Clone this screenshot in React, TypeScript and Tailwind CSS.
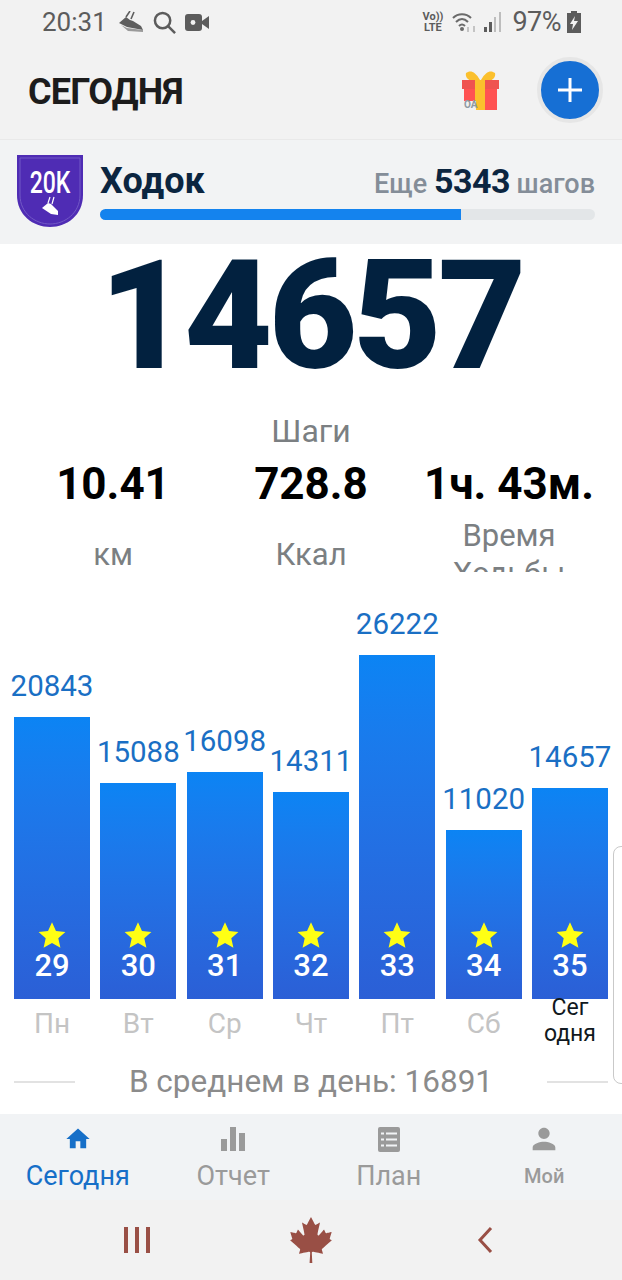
import { MdHome, MdPerson } from 'react-icons/md'
import { FaCanadianMapleLeaf } from 'react-icons/fa'

const DAYS = [
  { label: 'Пн', steps: 20843, height: 282, streak: 29 },
  { label: 'Вт', steps: 15088, height: 216, streak: 30 },
  { label: 'Ср', steps: 16098, height: 227, streak: 31 },
  { label: 'Чт', steps: 14311, height: 207, streak: 32 },
  { label: 'Пт', steps: 26222, height: 344, streak: 33 },
  { label: 'Сб', steps: 11020, height: 169, streak: 34 },
  { label: 'Сегодня', steps: 14657, height: 211, streak: 35, today: true },
]

function StatusBar() {
  return (
    <div className="h-[44px] bg-[#f2f2f2] flex items-center justify-between pl-[42px] pr-[41px] text-[#5c5c5c]">
      <div className="flex items-center">
        <span className="text-[26px] leading-none">20:31</span>
        <svg viewBox="0 0 25 22" className="w-[25px] h-[22px] ml-[12px]">
          <path d="M0 12 L7 6 L11 9 L14 10 L22 15 L24 19 L8 16 Z" fill="#5e5e5e" />
          <path d="M2 14 L9 20 L24 21 L24 19 L8 17 Z" fill="#9a9a9a" />
          <path d="M7 6 L11 0 M12 8 L15 1" stroke="#5e5e5e" strokeWidth="1.6" />
        </svg>
        <svg viewBox="0 0 24 24" className="w-[23px] h-[23px] ml-[9px]" fill="none" stroke="#5c5c5c" strokeWidth="2.6">
          <circle cx="10" cy="10" r="8" />
          <path d="M16 16 L23 23" />
        </svg>
        <svg viewBox="0 0 24 17" className="w-[24px] h-[17px] ml-[9px]">
          <rect width="17" height="17" rx="3" fill="#5c5c5c" />
          <path d="M17 7 L24 2 V15 L17 10 Z" fill="#5c5c5c" />
          <circle cx="8" cy="8.5" r="2.4" fill="#f2f2f2" />
        </svg>
      </div>
      <div className="flex items-center">
        <div className="text-[11px] leading-[11px] font-bold text-center">
          <div>Vo))</div>
          <div>LTE</div>
        </div>
        <svg viewBox="0 0 25 21" className="w-[25px] h-[21px] ml-[9px]" fill="none" stroke="#6a6a6a" strokeWidth="2">
          <path d="M1 6 C6 1 14 1 19 6 M4 10 C8 6 12 6 16 10 M7 14 C9 12 11 12 13 14" />
          <circle cx="10" cy="17" r="2" fill="#6a6a6a" stroke="none" />
          <path d="M16 20 V15 M22 20 V14" stroke="#b5b5b5" strokeWidth="1.5" />
        </svg>
        <svg viewBox="0 0 18 20" className="w-[18px] h-[20px] ml-[7px]">
          <rect x="0" y="15" width="3" height="5" fill="#5c5c5c" />
          <rect x="5" y="10" width="3" height="10" fill="#5c5c5c" />
          <rect x="10" y="5" width="2" height="15" fill="#bdbdbd" />
          <rect x="15" y="0" width="2" height="20" fill="#bdbdbd" />
        </svg>
        <span className="text-[27px] leading-none ml-[10px] tracking-[-0.5px]">97%</span>
        <svg viewBox="0 0 14 22" className="w-[14px] h-[22px] ml-[6px]">
          <path d="M4 0 H10 V2 H14 V22 H0 V2 H4 Z" fill="#5c5c5c" />
          <path d="M8 5 L3 13 H6 L5 19 L11 10 H7 Z" fill="#f2f2f2" />
        </svg>
      </div>
    </div>
  )
}

function Header() {
  return (
    <div className="h-[96px] bg-[#f2f2f2] border-b border-[#e9e9e9] flex items-center pl-[28px] pr-[19px]">
      <h1 className="text-[36px] font-bold text-[#1c1c1c] tracking-[-0.8px] flex-1">СЕГОДНЯ</h1>
      <div className="relative w-[37px] h-[40px] mr-[38px] -mt-[3px]">
        <svg viewBox="0 0 37 40" className="w-full h-full">
          <path d="M18 10 C13 1 8 0 4 3 C3 7 6 10 10 11 Z M19 10 C24 1 29 0 33 3 C34 7 31 10 27 11 Z" fill="#fbc02d" />
          <rect x="0" y="10" width="37" height="9" fill="#ef5350" />
          <rect x="2" y="19" width="33" height="21" fill="#ff5252" />
          <rect x="13" y="10" width="10" height="30" fill="#fbc02d" />
          <rect x="1" y="31" width="13" height="9" fill="#f2f2f2" />
        </svg>
        <span className="absolute left-[2px] bottom-0 text-[10px] leading-[10px] font-bold text-[#8f9aa3]">OA</span>
      </div>
      <button className="w-[66px] h-[66px] rounded-full bg-[#166fd4] border-[4px] border-[#e6e6e6] flex items-center justify-center -mt-[4px]">
        <svg viewBox="0 0 26 26" className="w-[26px] h-[26px]" stroke="#fff" strokeWidth="3">
          <path d="M13 1 V25 M1 13 H25" />
        </svg>
      </button>
    </div>
  )
}

function GoalBadge() {
  return (
    <div className="relative w-[66px] h-[72px] shrink-0">
      <svg viewBox="0 0 66 72" className="absolute inset-0 w-full h-full">
        <path d="M0 0 H66 V40 C66 60 50 72 33 72 C16 72 0 60 0 40 Z" fill="#4f2cb4" />
        <path d="M3 3 H63 V40 C63 58 48 69 33 69 C18 69 3 58 3 40 Z" fill="none" stroke="#7258c6" strokeWidth="1" />
        <path d="M25 53 L31 48 L34 49 L41 56 L41 60 L34 59 Z" fill="#fff" />
        <path d="M33 42 L31 48 M37 42 L35 49" stroke="#fff" strokeWidth="1.2" />
      </svg>
      <span className="absolute top-[9px] inset-x-0 text-center text-[32px] leading-[36px] font-medium text-white scale-x-[0.72]">20K</span>
    </div>
  )
}

function GoalRow() {
  return (
    <div className="h-[104px] bg-[#f2f3f4] flex pl-[17px] pr-[27px] pt-[15px]">
      <GoalBadge />
      <div className="flex-1 ml-[17px]">
        <div className="flex items-baseline justify-between h-[52px]">
          <span className="text-[36px] leading-[52px] font-bold text-[#0b2540]">Ходок</span>
          <span className="text-[27px] text-[#848d98] font-medium">
            Еще <span className="text-[34px] font-bold text-[#0b2540] tracking-[-0.5px]">5343</span> шагов
          </span>
        </div>
        <div className="h-[11px] mt-[2px] rounded-full bg-[#e3e6e8] overflow-hidden">
          <div className="h-full w-[73%] bg-[#1483ee]" />
        </div>
      </div>
    </div>
  )
}

function Stat({ value, label }: { value: string; label: string }) {
  return (
    <div className="w-[198px] flex flex-col items-center">
      <div className="text-[44px] leading-[54px] font-bold text-black whitespace-nowrap">{value}</div>
      <div className="h-[88px] shrink-0 flex items-center">
        <div className="max-w-[130px] text-[31px] leading-[38px] text-[#7b7f82] text-center">{label}</div>
      </div>
    </div>
  )
}

function Summary() {
  return (
    <div>
      <div className="text-[153px] leading-[143px] font-black text-[#02213f] text-center tracking-[-4px]">14657</div>
      <div className="text-[32px] leading-[40px] mt-[24px] text-[#7b7f82] text-center">Шаги</div>
      <div className="h-[121px] overflow-hidden flex justify-between px-[14px] pt-[6px]">
        <Stat value="10.41" label="км" />
        <Stat value="728.8" label="Ккал" />
        <Stat value="1ч. 43м." label="Время Ходьбы" />
      </div>
    </div>
  )
}

function Chart() {
  return (
    <div className="h-[427px] flex items-end justify-between px-[14px]">
      {DAYS.map(day => (
        <div key={day.label} className="w-[76px] flex flex-col items-center">
          <div className="text-[29.5px] leading-[36px] text-[#1a6fc4] mb-[13px] whitespace-nowrap">{day.steps}</div>
          <div
            className="w-full bg-gradient-to-b from-[#0b84f4] to-[#2b5fd6] flex flex-col items-center justify-end pb-[15px]"
            style={{ height: day.height }}
          >
            <svg viewBox="0 0 24 24" className="w-[28px] h-[28px]" fill="#ffff14">
              <path d="M12 1 L15.4 8.6 L23.5 9.4 L17.4 14.8 L19.2 23 L12 18.8 L4.8 23 L6.6 14.8 L0.5 9.4 L8.6 8.6 Z" />
            </svg>
            <span className="text-[31px] leading-[36px] font-medium text-white mt-[-1px]">{day.streak}</span>
          </div>
        </div>
      ))}
    </div>
  )
}

function DayLabels() {
  return (
    <div className="flex justify-between px-[14px] h-[54px]">
      {DAYS.map(day => (
        <div key={day.label} className="w-[76px] text-center">
          {day.today ? (
            <div className="text-[23px] leading-[26px] text-[#101820] -mt-[4px]">
              Сег
              <br />
              одня
            </div>
          ) : (
            <div className="text-[28px] leading-[50px] text-[#c4c4c4]">{day.label}</div>
          )}
        </div>
      ))}
    </div>
  )
}

function Average() {
  return (
    <div className="flex items-center justify-between px-[14px] h-[61px] pb-[3px]">
      <div className="w-[61px] h-[2px] bg-[#e2e2e2]" />
      <span className="text-[31.5px] text-[#8b8b8b]">В среднем в день: 16891</span>
      <div className="w-[61px] h-[2px] bg-[#e2e2e2]" />
    </div>
  )
}

function TabItem({ icon, label, active, small }: { icon: React.ReactNode; label: string; active?: boolean; small?: boolean }) {
  return (
    <div className={`flex-1 flex flex-col items-center ${active ? 'text-[#166fc8]' : 'text-[#9a9a9a]'}`}>
      <div className="h-[36px] flex items-center justify-center">{icon}</div>
      <div className={`${small ? 'text-[20px] font-medium' : 'text-[27px]'} leading-[36px] h-[36px] mt-[1px]`}>{label}</div>
    </div>
  )
}

function TabBar() {
  return (
    <div className="h-[86px] bg-[#f1f3f5] flex pt-[7px]">
      <TabItem active label="Сегодня" icon={<MdHome className="w-[28px] h-[28px]" />} />
      <TabItem
        label="Отчет"
        icon={
          <svg viewBox="0 0 24 24" className="w-[24px] h-[24px]" fill="currentColor">
            <rect x="0" y="12" width="6" height="12" />
            <rect x="9" y="0" width="6" height="24" />
            <rect x="18" y="6" width="6" height="18" />
          </svg>
        }
      />
      <TabItem
        label="План"
        icon={
          <svg viewBox="0 0 22 25" className="w-[22px] h-[25px]">
            <rect width="22" height="25" rx="2" fill="currentColor" />
            <path d="M3 6.5 H6 M8 6.5 H19 M3 12.5 H6 M8 12.5 H19 M3 18.5 H6 M8 18.5 H19" stroke="#f1f3f5" strokeWidth="2" />
          </svg>
        }
      />
      <TabItem small label="Мой" icon={<MdPerson className="w-[34px] h-[34px]" />} />
    </div>
  )
}

function NavBar() {
  return (
    <div className="h-[80px] bg-[#f2f2f2] grid grid-cols-3 items-center px-[50px] text-[#994f45]">
      <div className="flex justify-center gap-[7px]">
        <div className="w-[4px] h-[26px] bg-current" />
        <div className="w-[4px] h-[26px] bg-current" />
        <div className="w-[4px] h-[26px] bg-current" />
      </div>
      <div className="flex justify-center">
        <FaCanadianMapleLeaf className="w-[46px] h-[46px]" />
      </div>
      <div className="flex justify-center">
        <svg viewBox="0 0 16 28" className="w-[16px] h-[28px]" fill="none" stroke="currentColor" strokeWidth="3">
          <path d="M14 2 L3 14 L14 26" />
        </svg>
      </div>
    </div>
  )
}

export default function App() {
  return (
    <div className="relative w-[622px] h-[1280px] overflow-hidden bg-white font-['Roboto',sans-serif]">
      <StatusBar />
      <Header />
      <GoalRow />
      <Summary />
      <Chart />
      <DayLabels />
      <Average />
      <TabBar />
      <NavBar />
      {/* edge panel handle */}
      <div className="absolute right-[-8px] top-[846px] w-[17px] h-[238px] rounded-[8px] border border-[#c9c9c9]" />
    </div>
  )
}
